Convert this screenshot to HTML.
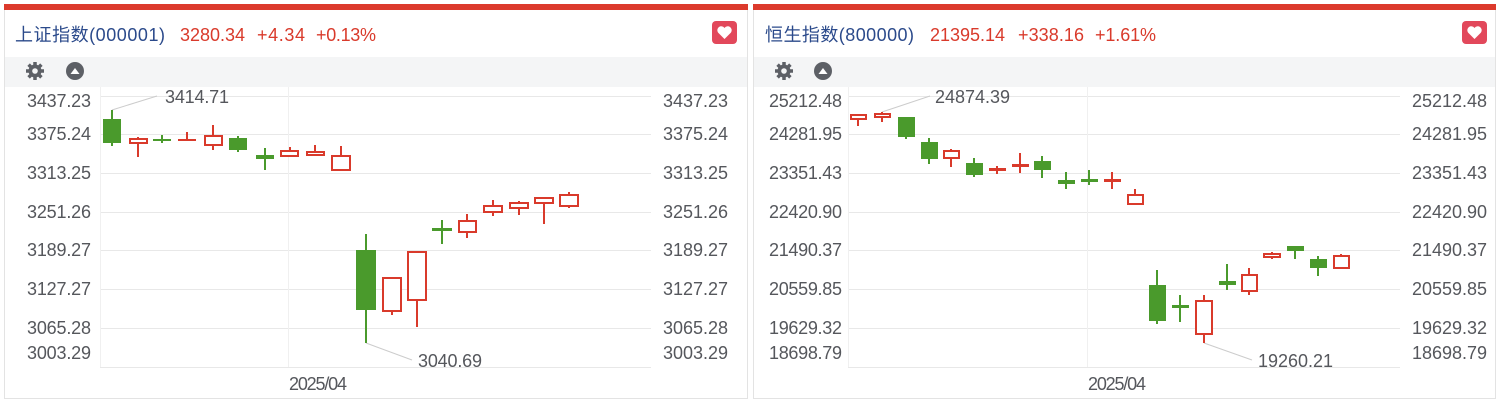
<!DOCTYPE html>
<html><head><meta charset="utf-8"><style>
body{margin:0;width:1500px;height:406px;background:#fff;overflow:hidden;font-family:"Liberation Sans","Noto Sans CJK SC",sans-serif}
svg{position:absolute;left:0;top:0}
</style></head><body>
<svg width="1500" height="406" viewBox="0 0 1500 406" font-family="Liberation Sans, Noto Sans CJK SC, sans-serif">
<!-- panel 1 -->
<rect x="4.5" y="5.5" width="743" height="393" fill="#fff" stroke="#e3e3e3"/>
<rect x="4" y="4" width="744" height="6" fill="#dc3a2c"/>
<text x="15" y="41" font-size="18" fill="#2b4a8b" textLength="150">上证指数(000001)</text>
<text x="180" y="41" font-size="18" fill="#d93a2b" textLength="65">3280.34</text>
<text x="257" y="41" font-size="18" fill="#d93a2b" textLength="48">+4.34</text>
<text x="316" y="41" font-size="18" fill="#d93a2b" textLength="60">+0.13%</text>
<rect x="712" y="21" width="25" height="23" rx="4" fill="#e2485b"/>
<path d="M724.5 39 L718 32.5 A3.6 3.6 0 0 1 724.5 28 A3.6 3.6 0 0 1 731 32.5 Z" fill="#fff"/>
<rect x="5" y="57" width="742" height="30" fill="#f4f5f6"/>
<g transform="translate(35,71)" fill="#5d6066"><circle r="6.5"/><g stroke="#5d6066" stroke-width="3.5"><line x1="0" y1="-9" x2="0" y2="9"/><line x1="-9" y1="0" x2="9" y2="0"/><line x1="-6.4" y1="-6.4" x2="6.4" y2="6.4"/><line x1="-6.4" y1="6.4" x2="6.4" y2="-6.4"/></g><circle r="2.8" fill="#f4f5f6"/></g>
<circle cx="75" cy="71" r="9" fill="#5d6066"/><path d="M70.5 74 L75 68 L79.5 74 Z" fill="#fff"/>
<g stroke="#e8e8e8" stroke-width="1">
<line x1="100" y1="96.5" x2="651" y2="96.5"/><line x1="100" y1="134.5" x2="651" y2="134.5"/><line x1="100" y1="173.5" x2="651" y2="173.5"/><line x1="100" y1="212.5" x2="651" y2="212.5"/><line x1="100" y1="250.5" x2="651" y2="250.5"/><line x1="100" y1="289.5" x2="651" y2="289.5"/><line x1="100" y1="328.5" x2="651" y2="328.5"/><line x1="100" y1="367.5" x2="651" y2="367.5"/>
<line x1="288.5" y1="87" x2="288.5" y2="367" stroke="#f0f0f0"/>
<line x1="100.5" y1="87" x2="100.5" y2="367" stroke="#f0f0f0"/>
</g>
<g font-size="18" fill="#55575c">
<text x="27" y="107" textLength="64">3437.23</text><text x="27" y="140" textLength="64">3375.24</text><text x="27" y="179" textLength="64">3313.25</text><text x="27" y="218" textLength="64">3251.26</text><text x="27" y="256" textLength="64">3189.27</text><text x="27" y="295" textLength="64">3127.27</text><text x="27" y="334" textLength="64">3065.28</text><text x="27" y="359" textLength="64">3003.29</text>
<text x="663" y="107" textLength="65">3437.23</text><text x="663" y="140" textLength="65">3375.24</text><text x="663" y="179" textLength="65">3313.25</text><text x="663" y="218" textLength="65">3251.26</text><text x="663" y="256" textLength="65">3189.27</text><text x="663" y="295" textLength="65">3127.27</text><text x="663" y="334" textLength="65">3065.28</text><text x="663" y="359" textLength="65">3003.29</text>
<text x="289" y="390" textLength="58">2025/04</text>
<text x="165" y="103" textLength="64">3414.71</text><text x="418" y="367" textLength="64">3040.69</text>
</g>
<line x1="112" y1="110" x2="157" y2="96" stroke="#ccc"/><line x1="366" y1="343" x2="412" y2="360" stroke="#ccc"/>
<g stroke-width="2">
<line x1="112" y1="110" x2="112" y2="146" stroke="#4a9a2c"/><rect x="103" y="119" width="18" height="24" fill="#4a9a2c"/>
<line x1="138" y1="137" x2="138" y2="157" stroke="#d93a2b"/><rect x="130" y="139" width="17" height="4" fill="#fff" stroke="#d93a2b"/>
<line x1="162" y1="135" x2="162" y2="143" stroke="#4a9a2c"/><rect x="153" y="139" width="18" height="2" fill="#4a9a2c"/>
<line x1="187" y1="132" x2="187" y2="141" stroke="#d93a2b"/><rect x="178" y="139" width="18" height="2" fill="#d93a2b"/>
<line x1="213" y1="125" x2="213" y2="150" stroke="#d93a2b"/><rect x="205" y="136" width="17" height="9" fill="#fff" stroke="#d93a2b"/>
<line x1="238" y1="136" x2="238" y2="152" stroke="#4a9a2c"/><rect x="229" y="138" width="18" height="12" fill="#4a9a2c"/>
<line x1="265" y1="148" x2="265" y2="170" stroke="#4a9a2c"/><rect x="256" y="155" width="18" height="4" fill="#4a9a2c"/>
<line x1="290" y1="147" x2="290" y2="157" stroke="#d93a2b"/><rect x="281" y="151" width="17" height="5" fill="#fff" stroke="#d93a2b"/>
<line x1="315" y1="145" x2="315" y2="156" stroke="#d93a2b"/><rect x="307" y="152" width="17" height="3" fill="#fff" stroke="#d93a2b"/>
<line x1="341" y1="146" x2="341" y2="170" stroke="#d93a2b"/><rect x="332" y="156" width="18" height="14" fill="#fff" stroke="#d93a2b"/>
<line x1="366" y1="234" x2="366" y2="343" stroke="#4a9a2c"/><rect x="356" y="250" width="20" height="60" fill="#4a9a2c"/>
<line x1="392" y1="278" x2="392" y2="315" stroke="#d93a2b"/><rect x="383" y="278" width="18" height="33" fill="#fff" stroke="#d93a2b"/>
<line x1="417" y1="252" x2="417" y2="327" stroke="#d93a2b"/><rect x="408" y="252" width="18" height="48" fill="#fff" stroke="#d93a2b"/>
<line x1="442" y1="220" x2="442" y2="244" stroke="#4a9a2c"/><rect x="432" y="228" width="20" height="3" fill="#4a9a2c"/>
<line x1="467" y1="214" x2="467" y2="238" stroke="#d93a2b"/><rect x="459" y="221" width="17" height="11" fill="#fff" stroke="#d93a2b"/>
<line x1="493" y1="200" x2="493" y2="216" stroke="#d93a2b"/><rect x="484" y="206" width="18" height="6" fill="#fff" stroke="#d93a2b"/>
<line x1="519" y1="201" x2="519" y2="215" stroke="#d93a2b"/><rect x="510" y="203" width="18" height="5" fill="#fff" stroke="#d93a2b"/>
<line x1="544" y1="198" x2="544" y2="224" stroke="#d93a2b"/><rect x="535" y="198" width="18" height="5" fill="#fff" stroke="#d93a2b"/>
<line x1="569" y1="192" x2="569" y2="208" stroke="#d93a2b"/><rect x="560" y="195" width="18" height="11" fill="#fff" stroke="#d93a2b"/>
</g>

<!-- panel 2 -->
<rect x="753.5" y="5.5" width="742" height="393" fill="#fff" stroke="#e3e3e3"/>
<rect x="753" y="4" width="743" height="6" fill="#dc3a2c"/>
<text x="765" y="41" font-size="18" fill="#2b4a8b" textLength="149">恒生指数(800000)</text>
<text x="930" y="41" font-size="18" fill="#d93a2b" textLength="75">21395.14</text>
<text x="1018" y="41" font-size="18" fill="#d93a2b" textLength="66">+338.16</text>
<text x="1095" y="41" font-size="18" fill="#d93a2b" textLength="61">+1.61%</text>
<rect x="1462" y="21" width="25" height="23" rx="4" fill="#e2485b"/>
<path d="M1474.5 39 L1468 32.5 A3.6 3.6 0 0 1 1474.5 28 A3.6 3.6 0 0 1 1481 32.5 Z" fill="#fff"/>
<rect x="754" y="57" width="741" height="30" fill="#f4f5f6"/>
<g transform="translate(784,71)" fill="#5d6066"><circle r="6.5"/><g stroke="#5d6066" stroke-width="3.5"><line x1="0" y1="-9" x2="0" y2="9"/><line x1="-9" y1="0" x2="9" y2="0"/><line x1="-6.4" y1="-6.4" x2="6.4" y2="6.4"/><line x1="-6.4" y1="6.4" x2="6.4" y2="-6.4"/></g><circle r="2.8" fill="#f4f5f6"/></g>
<circle cx="823" cy="71" r="9" fill="#5d6066"/><path d="M818.5 74 L823 68 L827.5 74 Z" fill="#fff"/>
<g stroke="#e8e8e8" stroke-width="1">
<line x1="848" y1="96.5" x2="1400" y2="96.5"/><line x1="848" y1="134.5" x2="1400" y2="134.5"/><line x1="848" y1="173.5" x2="1400" y2="173.5"/><line x1="848" y1="212.5" x2="1400" y2="212.5"/><line x1="848" y1="250.5" x2="1400" y2="250.5"/><line x1="848" y1="289.5" x2="1400" y2="289.5"/><line x1="848" y1="328.5" x2="1400" y2="328.5"/><line x1="848" y1="367.5" x2="1400" y2="367.5"/>
<line x1="1087.5" y1="87" x2="1087.5" y2="367" stroke="#f0f0f0"/>
<line x1="848.5" y1="87" x2="848.5" y2="367" stroke="#f0f0f0"/>
</g>
<g font-size="18" fill="#55575c">
<text x="769" y="107" textLength="73">25212.48</text><text x="769" y="140" textLength="73">24281.95</text><text x="769" y="179" textLength="73">23351.43</text><text x="769" y="218" textLength="73">22420.90</text><text x="769" y="256" textLength="73">21490.37</text><text x="769" y="295" textLength="73">20559.85</text><text x="769" y="334" textLength="73">19629.32</text><text x="769" y="359" textLength="73">18698.79</text>
<text x="1412" y="107" textLength="75">25212.48</text><text x="1412" y="140" textLength="75">24281.95</text><text x="1412" y="179" textLength="75">23351.43</text><text x="1412" y="218" textLength="75">22420.90</text><text x="1412" y="256" textLength="75">21490.37</text><text x="1412" y="295" textLength="75">20559.85</text><text x="1412" y="334" textLength="75">19629.32</text><text x="1412" y="359" textLength="75">18698.79</text>
<text x="1088" y="390" textLength="58">2025/04</text>
<text x="935" y="103" textLength="75">24874.39</text><text x="1258" y="367" textLength="75">19260.21</text>
</g>
<line x1="882" y1="112" x2="930" y2="96" stroke="#ccc"/><line x1="1204" y1="343" x2="1252" y2="360" stroke="#ccc"/>
<g stroke-width="2">
<line x1="858" y1="114" x2="858" y2="126" stroke="#d93a2b"/><rect x="851" y="115" width="15" height="4" fill="#fff" stroke="#d93a2b"/>
<line x1="882" y1="112" x2="882" y2="122" stroke="#d93a2b"/><rect x="875" y="114" width="15" height="3" fill="#fff" stroke="#d93a2b"/>
<line x1="906" y1="117" x2="906" y2="139" stroke="#4a9a2c"/><rect x="898" y="117" width="17" height="20" fill="#4a9a2c"/>
<line x1="929" y1="138" x2="929" y2="164" stroke="#4a9a2c"/><rect x="921" y="142" width="17" height="17" fill="#4a9a2c"/>
<line x1="951" y1="149" x2="951" y2="167" stroke="#d93a2b"/><rect x="944" y="151" width="15" height="7" fill="#fff" stroke="#d93a2b"/>
<line x1="974" y1="158" x2="974" y2="177" stroke="#4a9a2c"/><rect x="966" y="163" width="17" height="12" fill="#4a9a2c"/>
<line x1="997" y1="166" x2="997" y2="174" stroke="#d93a2b"/><rect x="989" y="168" width="17" height="3" fill="#d93a2b"/>
<line x1="1020" y1="153" x2="1020" y2="173" stroke="#d93a2b"/><rect x="1012" y="164" width="17" height="3" fill="#d93a2b"/>
<line x1="1042" y1="156" x2="1042" y2="178" stroke="#4a9a2c"/><rect x="1034" y="161" width="17" height="9" fill="#4a9a2c"/>
<line x1="1066" y1="172" x2="1066" y2="189" stroke="#4a9a2c"/><rect x="1058" y="180" width="17" height="4" fill="#4a9a2c"/>
<line x1="1089" y1="170" x2="1089" y2="185" stroke="#4a9a2c"/><rect x="1081" y="179" width="17" height="3" fill="#4a9a2c"/>
<line x1="1112" y1="172" x2="1112" y2="189" stroke="#d93a2b"/><rect x="1104" y="179" width="17" height="3" fill="#d93a2b"/>
<line x1="1135" y1="189" x2="1135" y2="204" stroke="#d93a2b"/><rect x="1128" y="195" width="15" height="9" fill="#fff" stroke="#d93a2b"/>
<line x1="1157" y1="270" x2="1157" y2="324" stroke="#4a9a2c"/><rect x="1149" y="285" width="17" height="36" fill="#4a9a2c"/>
<line x1="1180" y1="295" x2="1180" y2="322" stroke="#4a9a2c"/><rect x="1172" y="305" width="17" height="3" fill="#4a9a2c"/>
<line x1="1204" y1="295" x2="1204" y2="343" stroke="#d93a2b"/><rect x="1196" y="301" width="16" height="33" fill="#fff" stroke="#d93a2b"/>
<line x1="1227" y1="264" x2="1227" y2="290" stroke="#4a9a2c"/><rect x="1219" y="281" width="17" height="4" fill="#4a9a2c"/>
<line x1="1249" y1="268" x2="1249" y2="295" stroke="#d93a2b"/><rect x="1242" y="275" width="15" height="16" fill="#fff" stroke="#d93a2b"/>
<line x1="1272" y1="252" x2="1272" y2="259" stroke="#d93a2b"/><rect x="1264" y="254" width="16" height="3" fill="#fff" stroke="#d93a2b"/>
<line x1="1295" y1="246" x2="1295" y2="259" stroke="#4a9a2c"/><rect x="1287" y="246" width="17" height="5" fill="#4a9a2c"/>
<line x1="1318" y1="256" x2="1318" y2="276" stroke="#4a9a2c"/><rect x="1310" y="259" width="17" height="9" fill="#4a9a2c"/>
<line x1="1341" y1="254" x2="1341" y2="268" stroke="#d93a2b"/><rect x="1334" y="256" width="15" height="12" fill="#fff" stroke="#d93a2b"/>
</g>
</svg>
</body></html>
